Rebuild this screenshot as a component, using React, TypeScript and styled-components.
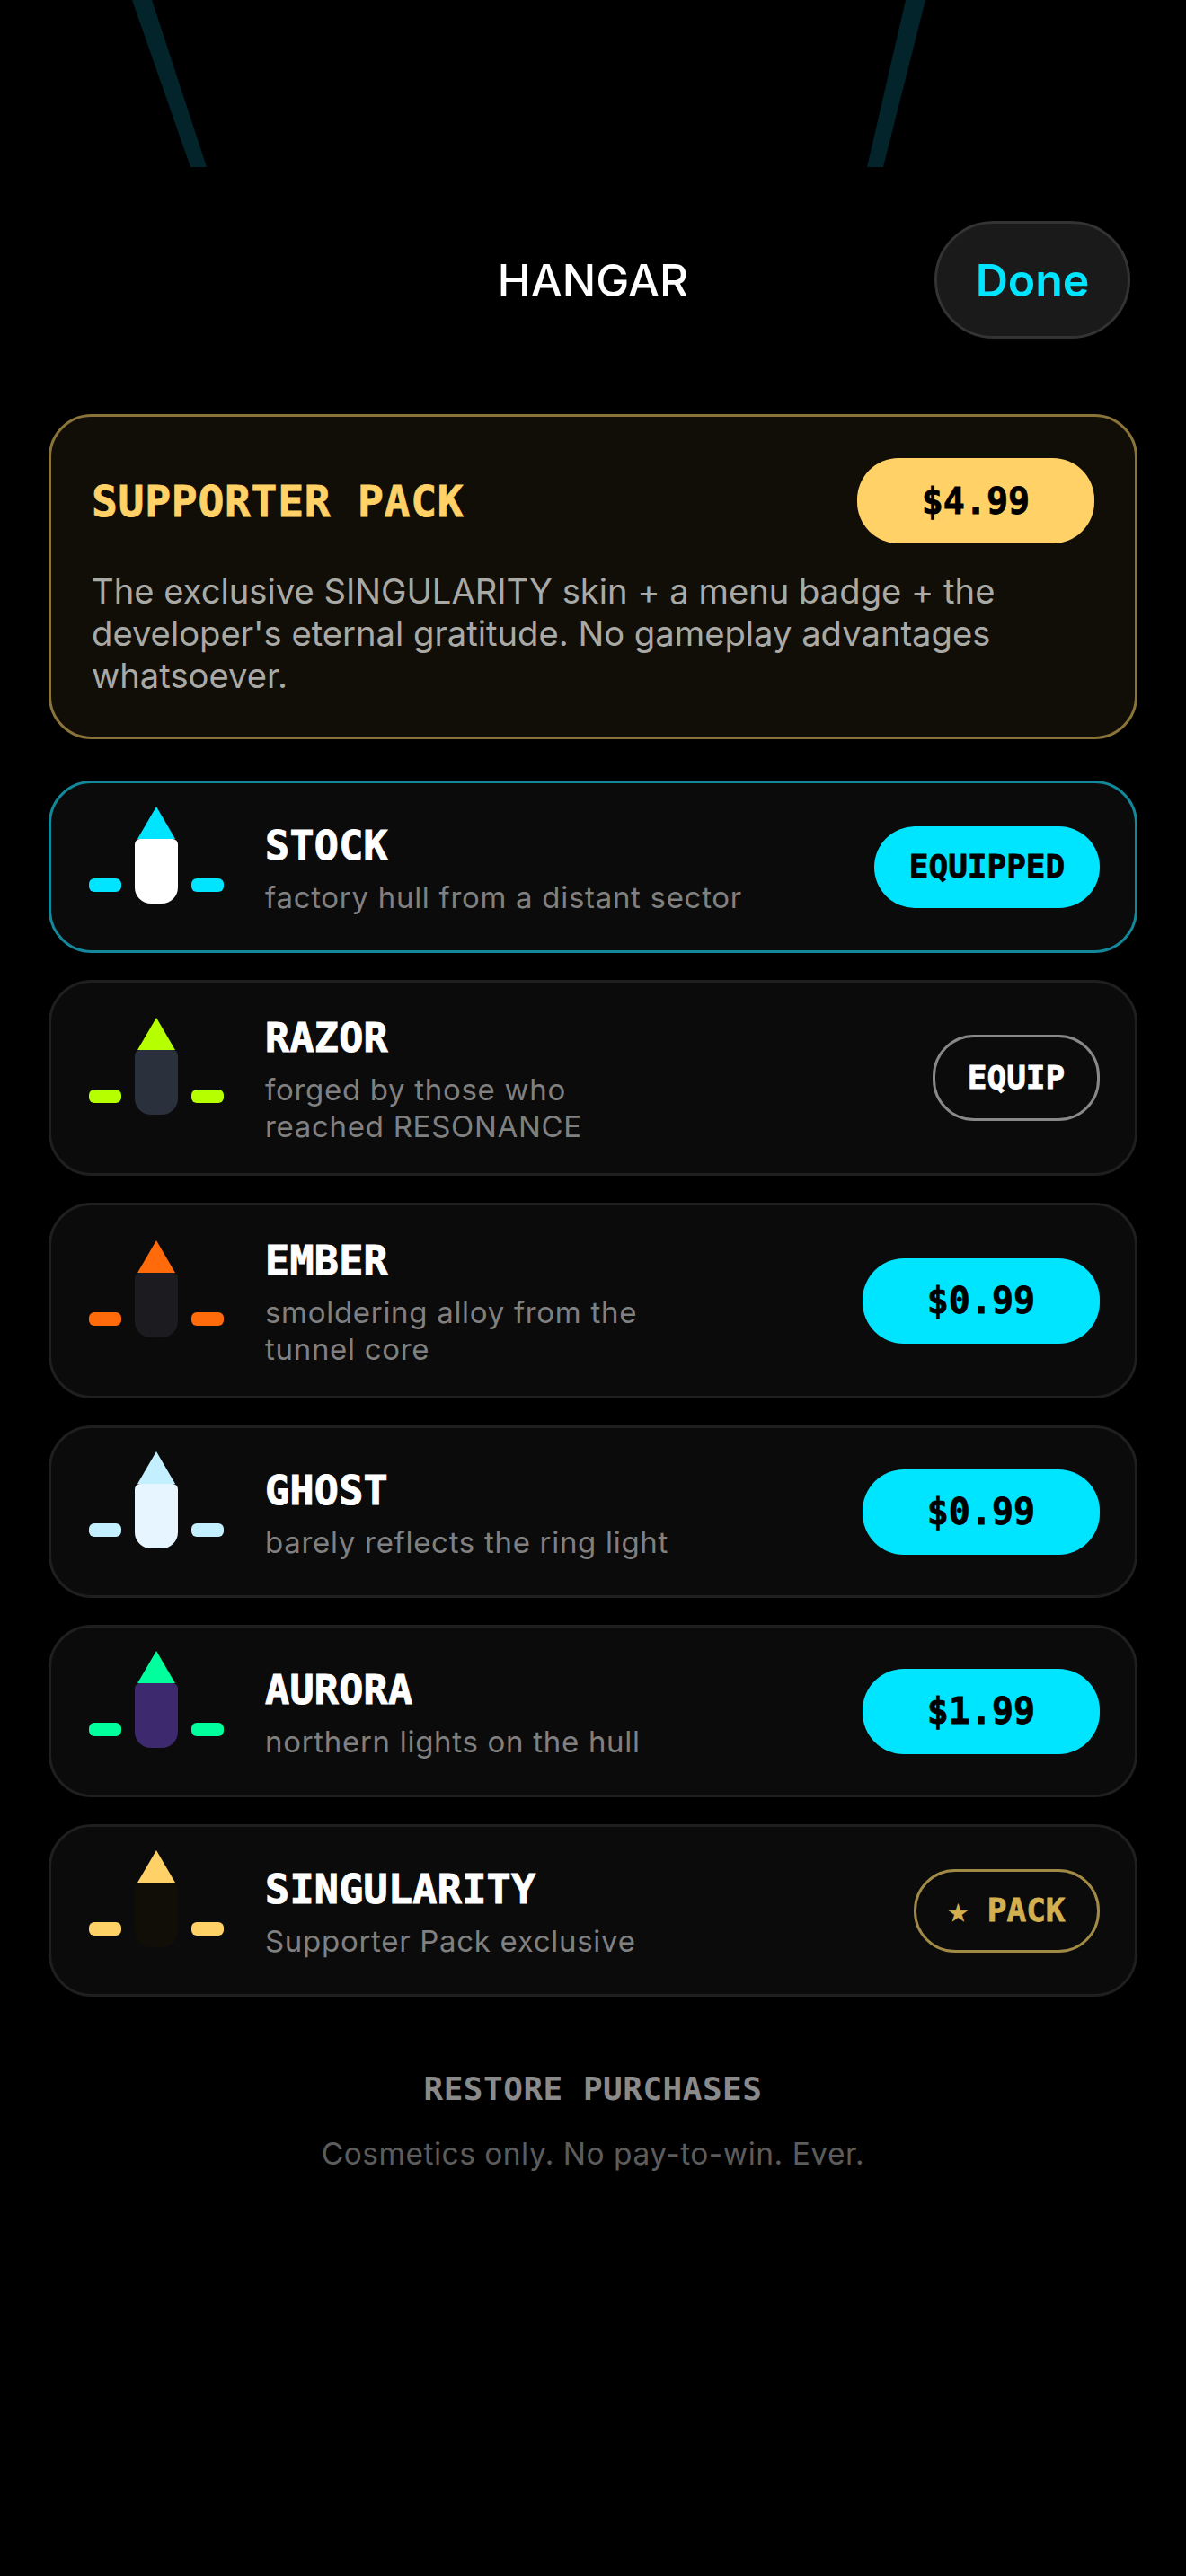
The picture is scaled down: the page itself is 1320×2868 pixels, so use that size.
import React from "react";
import styled, { createGlobalStyle, css } from "styled-components";

const Global = createGlobalStyle`
  html, body { margin: 0; padding: 0; background: #000; }
  body { font-family: Inter, "Liberation Sans", sans-serif; -webkit-font-smoothing: antialiased; }
`;
const MONO = `"DejaVu Sans Mono", "Liberation Mono", monospace`;

const Page = styled.main`
  width: 1320px;
  height: 2868px;
  background: #000;
  display: flex;
  flex-direction: column;
  overflow: hidden;
`;
const Backdrop = styled.svg`
  display: block;
  width: 1320px;
  height: 186px;
  flex: none;
`;
const Header = styled.header`
  height: 131px;
  margin: 60px 62px 84px 0;
  padding-left: 62px;
  display: grid;
  grid-template-columns: 218px 1fr 218px;
  align-items: center;
`;
const Title = styled.h1`
  grid-column: 2;
  margin: 0;
  text-align: center;
  font: 500 49.5px/60px Inter, sans-serif;
  color: #fff;
`;
const Done = styled.button`
  grid-column: 3;
  height: 131px;
  border: 3px solid #333;
  border-radius: 66px;
  background: #1a1a1a;
  color: #00e5ff;
  font: 600 50px/60px Inter, sans-serif;
  padding: 0;
`;
const Content = styled.section`
  padding: 0 54px;
  display: flex;
  flex-direction: column;
`;
const Pack = styled.div`
  height: 362px;
  box-sizing: border-box;
  margin-bottom: 46px;
  padding: 46px 45px 0;
  border: 3px solid #8a7339;
  border-radius: 48px;
  background: #110e08;
`;
const PackTop = styled.div`
  display: flex;
  align-items: center;
  justify-content: space-between;
`;
const PackTitle = styled.h2`
  margin: 0;
  font: 700 48px/60px ${MONO};
  letter-spacing: 0.7px;
  color: #ffd166;
  -webkit-text-stroke: 0.8px #ffd166;
`;
const PackBody = styled.p`
  margin: 30px 0 0;
  font: 400 38.2px/47px Inter, sans-serif;
  color: #a9a9a5;
`;
const List = styled.div`
  display: flex;
  flex-direction: column;
  gap: 30px;
`;
const Row = styled.article<{ $active?: boolean }>`
  display: flex;
  align-items: center;
  padding: 26px 39px 26px 42px;
  border: 3px solid ${(p) => (p.$active ? "#12889a" : "#1f1f1f")};
  border-radius: 48px;
  background: #0b0b0b;
`;
const Ship = styled.svg`
  display: block;
  width: 150px;
  height: 134px;
  flex: none;
  margin-right: 46px;
`;
const Info = styled.div`
  flex: 1;
  padding: 8px 0 5px;
`;
const Name = styled.div`
  font: 700 45px/55px ${MONO};
  letter-spacing: 0.3px;
  color: #fff;
  -webkit-text-stroke: 1px #fff;
`;
const Sub = styled.div`
  margin-top: 10px;
  font: 400 33px/41px Inter, sans-serif;
  letter-spacing: 0.7px;
  color: #808080;
`;
const Action = styled.button<{ $kind: "equipped" | "equip" | "buy" | "gold" | "pack" }>`
  flex: none;
  box-sizing: border-box;
  border-radius: 46px;
  font: 700 36px/44px ${MONO};
  padding: 0;
  -webkit-text-stroke: 0.8px currentColor;
  ${(p) =>
    p.$kind === "equipped" &&
    css`
      width: 251px;
      height: 91px;
      border: 0;
      background: #00e5ff;
      color: #000;
    `}
  ${(p) =>
    p.$kind === "equip" &&
    css`
      width: 186px;
      height: 96px;
      border: 3px solid #888;
      background: transparent;
      color: #fff;
    `}
  ${(p) =>
    p.$kind === "buy" &&
    css`
      width: 264px;
      height: 95px;
      border: 0;
      background: #00e5ff;
      color: #000;
      font-size: 40px;
    `}
  ${(p) =>
    p.$kind === "gold" &&
    css`
      width: 264px;
      height: 95px;
      border: 0;
      background: #ffd166;
      color: #000;
      font-size: 40px;
    `}
  ${(p) =>
    p.$kind === "pack" &&
    css`
      width: 207px;
      height: 93px;
      border: 3px solid #a08a45;
      background: transparent;
      color: #d4af50;
    `}
`;
const Footer = styled.footer`
  margin-top: 81px;
  display: flex;
  flex-direction: column;
  align-items: center;
  gap: 28px;
`;
const Restore = styled.div`
  font: 700 36px/44px ${MONO};
  letter-spacing: 0.5px;
  color: #8a8a8a;
`;
const Note = styled.div`
  font: 400 33.5px/44px Inter, sans-serif;
  letter-spacing: 0.5px;
  color: #5c5c5c;
`;

type Skin = {
  name: string;
  sub: React.ReactNode;
  body: string;
  accent: string;
  action: "equipped" | "equip" | "buy" | "pack";
  label: string;
};

const skins: Skin[] = [
  { name: "STOCK", sub: "factory hull from a distant sector", body: "#ffffff", accent: "#00e5ff", action: "equipped", label: "EQUIPPED" },
  { name: "RAZOR", sub: <>forged by those who<br />reached RESONANCE</>, body: "#2a303c", accent: "#b6ff00", action: "equip", label: "EQUIP" },
  { name: "EMBER", sub: <>smoldering alloy from the<br />tunnel core</>, body: "#1c1c20", accent: "#ff6b0a", action: "buy", label: "$0.99" },
  { name: "GHOST", sub: "barely reflects the ring light", body: "#e6f5ff", accent: "#c4efff", action: "buy", label: "$0.99" },
  { name: "AURORA", sub: "northern lights on the hull", body: "#3d2a6e", accent: "#00ff9d", action: "buy", label: "$1.99" },
  { name: "SINGULARITY", sub: "Supporter Pack exclusive", body: "#110e08", accent: "#ffd166", action: "pack", label: "★ PACK" },
];

const ShipIcon = ({ body, accent }: { body: string; accent: string }) => (
  <Ship viewBox="0 0 150 134">
    <rect x="0" y="80" width="36" height="15" rx="6" fill={accent} />
    <rect x="114" y="80" width="36" height="15" rx="6" fill={accent} />
    <path d="M51 42a6 6 0 0 1 6-6h36a6 6 0 0 1 6 6v48a18 18 0 0 1-18 18H69a18 18 0 0 1-18-18z" fill={body} />
    <path d="M75 0L96 36H54z" fill={accent} />
  </Ship>
);

export default function App() {
  return (
    <Page>
      <Global />
      <Backdrop viewBox="0 0 1320 186">
        <path d="M147 0H169L230 186H212Z" fill="#02242a" />
        <path d="M1008 0H1030L983 186H965Z" fill="#02242a" />
      </Backdrop>
      <Header>
        <Title>HANGAR</Title>
        <Done>Done</Done>
      </Header>
      <Content>
        <Pack>
          <PackTop>
            <PackTitle>SUPPORTER PACK</PackTitle>
            <Action $kind="gold">$4.99</Action>
          </PackTop>
          <PackBody>
            The exclusive SINGULARITY skin + a menu badge + the developer's eternal gratitude. No gameplay advantages whatsoever.
          </PackBody>
        </Pack>
        <List>
          {skins.map((s, i) => (
            <Row key={s.name} $active={i === 0}>
              <ShipIcon body={s.body} accent={s.accent} />
              <Info>
                <Name>{s.name}</Name>
                <Sub>{s.sub}</Sub>
              </Info>
              <Action $kind={s.action}>{s.label}</Action>
            </Row>
          ))}
        </List>
        <Footer>
          <Restore>RESTORE PURCHASES</Restore>
          <Note>Cosmetics only. No pay-to-win. Ever.</Note>
        </Footer>
      </Content>
    </Page>
  );
}
